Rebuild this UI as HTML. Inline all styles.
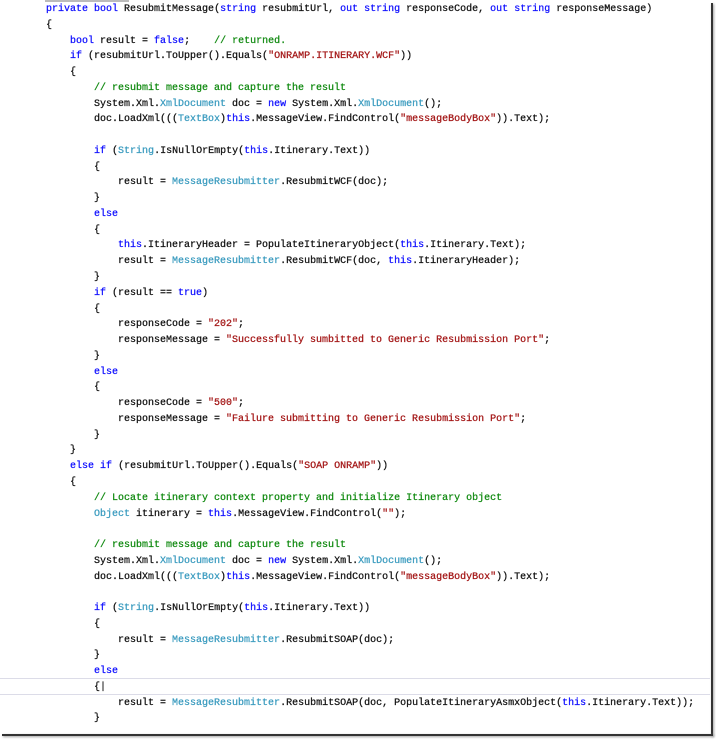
<!DOCTYPE html>
<html><head><meta charset="utf-8"><style>
html,body{margin:0;padding:0;background:#fff;width:716px;height:740px;overflow:hidden;position:relative}
pre{position:absolute;left:46px;top:2px;margin:0;font-family:"Liberation Mono",monospace;font-size:10px;line-height:15.76px;color:#111;-webkit-text-stroke:0.25px currentColor;}
.k{color:#1010ff}.t{color:#3a9bbf}.s{color:#a31515}.c{color:#118a11}
#hl{position:absolute;left:0;top:678px;width:710px;height:15px;border-top:1px solid #dcdce8;border-bottom:1px solid #dcdce8}
#rb{position:absolute;left:711px;top:3px;width:2px;height:733px;background:#333;box-shadow:1px 1px 2px #999}
#bb{position:absolute;left:2px;top:734px;width:711px;height:2px;background:#333;box-shadow:1px 1px 2px #999}
#tb{position:absolute;left:45px;top:0;width:84px;height:2px;background:#bbb}
</style></head><body>
<div id="tb"></div>
<div id="hl"></div>
<pre><span class="k">private</span> <span class="k">bool</span> ResubmitMessage(<span class="k">string</span> resubmitUrl, <span class="k">out</span> <span class="k">string</span> responseCode, <span class="k">out</span> <span class="k">string</span> responseMessage)
{
    <span class="k">bool</span> result = <span class="k">false</span>;    <span class="c">// returned.</span>
    <span class="k">if</span> (resubmitUrl.ToUpper().Equals(<span class="s">"ONRAMP.ITINERARY.WCF"</span>))
    {
        <span class="c">// resubmit message and capture the result</span>
        System.Xml.<span class="t">XmlDocument</span> doc = <span class="k">new</span> System.Xml.<span class="t">XmlDocument</span>();
        doc.LoadXml(((<span class="t">TextBox</span>)<span class="k">this</span>.MessageView.FindControl(<span class="s">"messageBodyBox"</span>)).Text);

        <span class="k">if</span> (<span class="t">String</span>.IsNullOrEmpty(<span class="k">this</span>.Itinerary.Text))
        {
            result = <span class="t">MessageResubmitter</span>.ResubmitWCF(doc);
        }
        <span class="k">else</span>
        {
            <span class="k">this</span>.ItineraryHeader = PopulateItineraryObject(<span class="k">this</span>.Itinerary.Text);
            result = <span class="t">MessageResubmitter</span>.ResubmitWCF(doc, <span class="k">this</span>.ItineraryHeader);
        }
        <span class="k">if</span> (result == <span class="k">true</span>)
        {
            responseCode = <span class="s">"202"</span>;
            responseMessage = <span class="s">"Successfully sumbitted to Generic Resubmission Port"</span>;
        }
        <span class="k">else</span>
        {
            responseCode = <span class="s">"500"</span>;
            responseMessage = <span class="s">"Failure submitting to Generic Resubmission Port"</span>;
        }
    }
    <span class="k">else</span> <span class="k">if</span> (resubmitUrl.ToUpper().Equals(<span class="s">"SOAP ONRAMP"</span>))
    {
        <span class="c">// Locate itinerary context property and initialize Itinerary object</span>
        <span class="t">Object</span> itinerary = <span class="k">this</span>.MessageView.FindControl(<span class="s">""</span>);

        <span class="c">// resubmit message and capture the result</span>
        System.Xml.<span class="t">XmlDocument</span> doc = <span class="k">new</span> System.Xml.<span class="t">XmlDocument</span>();
        doc.LoadXml(((<span class="t">TextBox</span>)<span class="k">this</span>.MessageView.FindControl(<span class="s">"messageBodyBox"</span>)).Text);

        <span class="k">if</span> (<span class="t">String</span>.IsNullOrEmpty(<span class="k">this</span>.Itinerary.Text))
        {
            result = <span class="t">MessageResubmitter</span>.ResubmitSOAP(doc);
        }
        <span class="k">else</span>
        {|
            result = <span class="t">MessageResubmitter</span>.ResubmitSOAP(doc, PopulateItineraryAsmxObject(<span class="k">this</span>.Itinerary.Text));
        }</pre>
<div id="rb"></div>
<div id="bb"></div>
</body></html>
